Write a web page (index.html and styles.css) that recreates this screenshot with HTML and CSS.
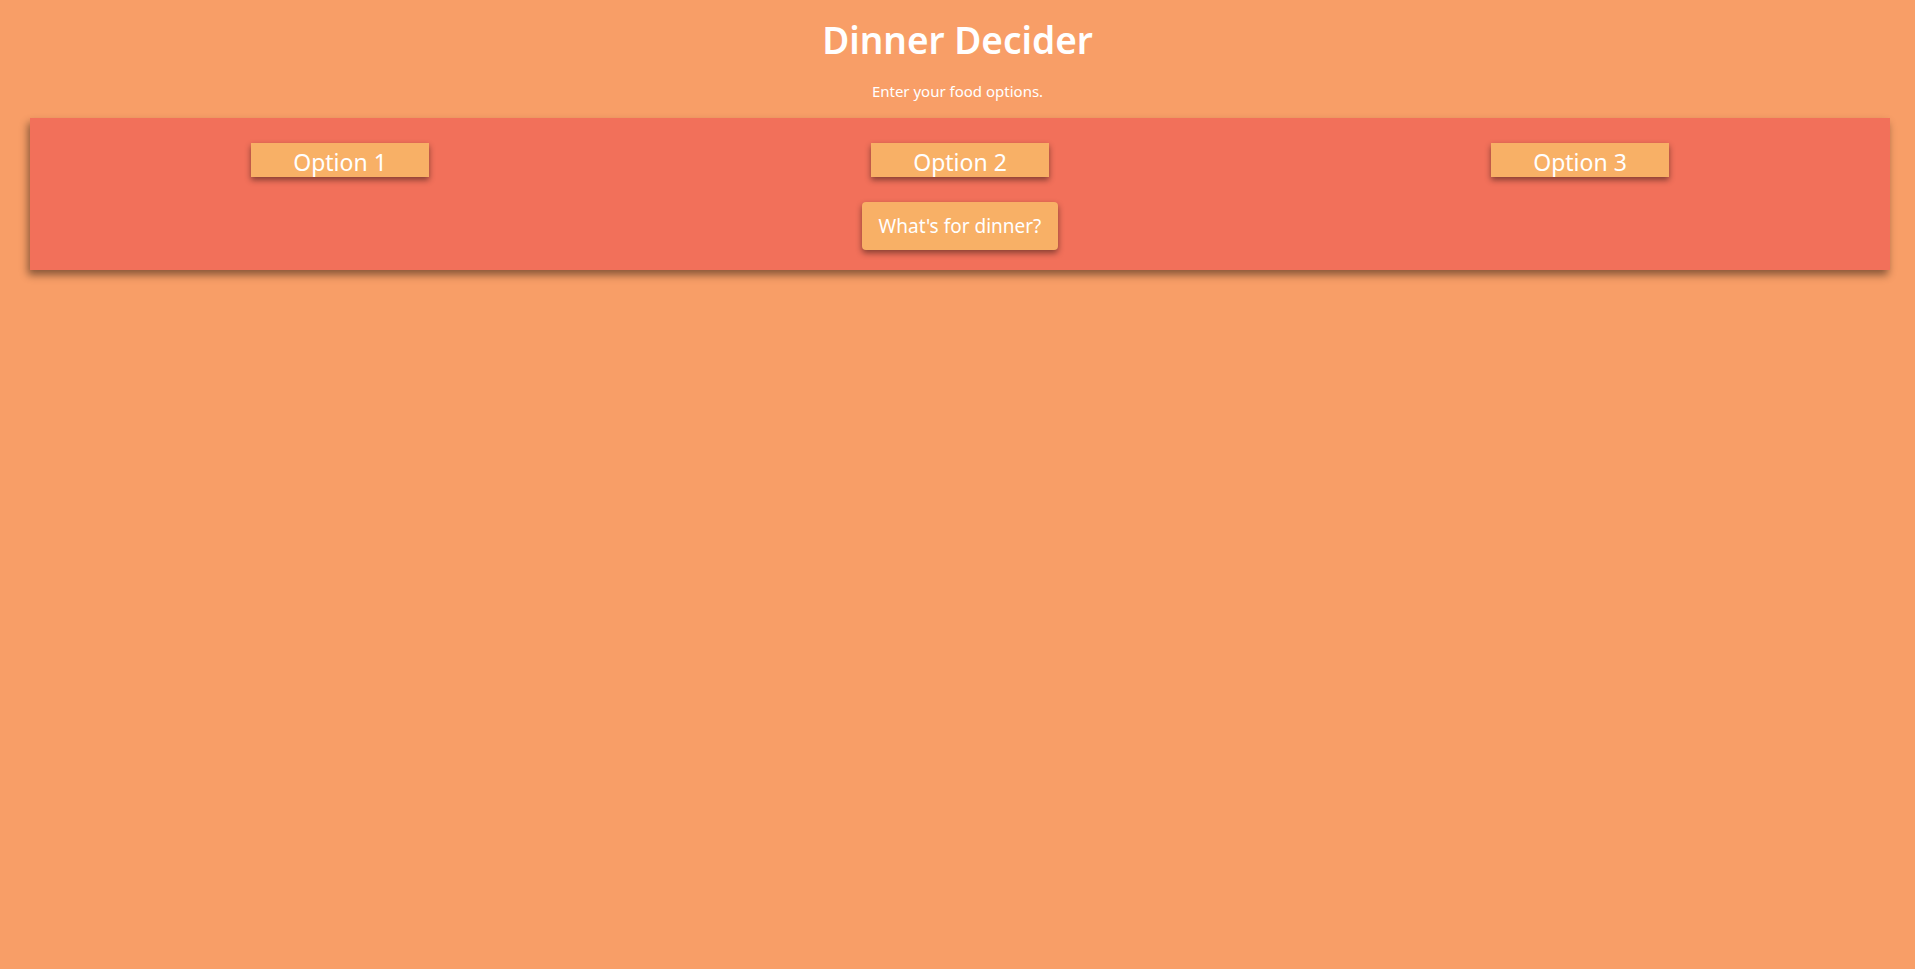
FILE: index.html
```html
<!DOCTYPE html>
<html>
<head>
<meta charset="utf-8">
<title>Dinner Decider</title>
<link rel="stylesheet" href="styles.css">
</head>
<body>
<header class="header">
  <h1 class="title">Dinner Decider</h1>
  <p class="subtitle">Enter your food options.</p>
</header>
<main class="panel">
  <div class="options">
    <div class="cell"><input class="option" type="text" placeholder="Option 1"></div>
    <div class="cell"><input class="option" type="text" placeholder="Option 2"></div>
    <div class="cell"><input class="option" type="text" placeholder="Option 3"></div>
  </div>
  <div class="actions">
    <button class="decide" type="button">What's for dinner?</button>
  </div>
</main>
</body>
</html>
```
FILE: styles.css
```css
html, body {
  margin: 0;
  padding: 0;
}
body {
  background: #f89e67;
  font-family: "Noto Sans", "Open Sans", sans-serif;
  color: #ffffff;
  min-height: 969px;
}
.header {
  text-align: center;
  padding-top: 14px;
}
.title {
  margin: 0;
  font-size: 37px;
  font-weight: 600;
  line-height: 52px;
}
.subtitle {
  margin: 15px 0 0 0;
  font-size: 15px;
  line-height: 20px;
}
.panel {
  margin: 17px 25px 0 30px;
  background: #f2705a;
  box-shadow: -2px 5px 8px rgba(0, 0, 0, 0.45);
  padding: 25px 0 20px 0;
}
.options {
  display: grid;
  grid-template-columns: 1fr 1fr 1fr;
}
.cell {
  display: flex;
  justify-content: center;
}
.option {
  width: 178px;
  height: 34px;
  box-sizing: border-box;
  border: none;
  outline: none;
  background: #f8b066;
  color: #ffffff;
  font-family: inherit;
  font-size: 23px;
  text-align: center;
  padding: 3px 0 0 0;
  box-shadow: 0 3px 6px rgba(0, 0, 0, 0.45);
}
.option::placeholder {
  color: #ffffff;
  opacity: 1;
}
.actions {
  display: flex;
  justify-content: center;
  margin-top: 25px;
}
.decide {
  width: 196px;
  height: 48px;
  border: none;
  border-radius: 4px;
  background: #f8b066;
  color: #ffffff;
  font-family: inherit;
  font-size: 19px;
  padding: 0;
  box-shadow: 0 3px 6px rgba(0, 0, 0, 0.45);
  cursor: pointer;
}
```
